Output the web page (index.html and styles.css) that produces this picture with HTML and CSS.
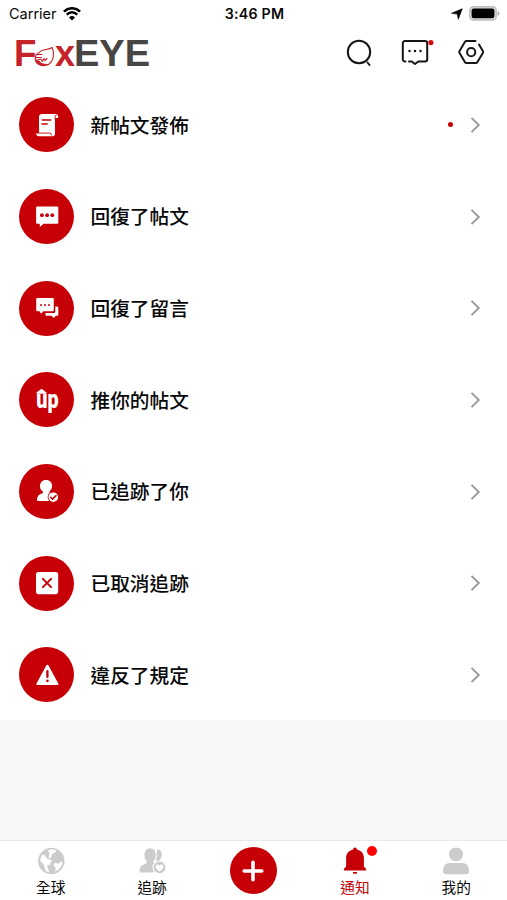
FILE: index.html
```html
<!DOCTYPE html>
<html lang="zh-Hant">
<head>
<meta charset="utf-8">
<title>FoxEYE</title>
<link rel="stylesheet" href="styles.css">
</head>
<body>
<div class="app">
  <div class="status">
    <div class="carrier">
      <span>Carrier</span>
      <svg width="18" height="14" viewBox="0 0 18 14" fill="none" stroke="#000" stroke-width="2.5"><path d="M.9 4.600C5.500.1 12.500.1 17.100 4.600M3.700 7.700C7 4.600 11 4.600 14.300 7.700"/><path d="M6 10.400a4.300 4.300 0 0 1 6 0l-3 3z" fill="#000" stroke="none"/></svg>
    </div>
    <div class="time">3:46 PM</div>
    <div class="power">
      <svg width="12" height="12" viewBox="0 0 12 12"><path d="M11.300.7 7.300 11.300 6.200 6.100.5 5.300z" stroke="#000" stroke-width=".6"/></svg>
      <svg width="31" height="15" viewBox="0 0 31 15"><rect x=".8" y=".8" width="26.400" height="13.200" rx="3.600" fill="#ddd" stroke="#bbb" stroke-width="1.400"/><rect x="2.600" y="2.500" width="22.800" height="9.800" rx="2.200"/><path d="M28.600 5.100q1.900.7 1.900 2.300t-1.900 2.300z" fill="#aaa"/></svg>
    </div>
  </div>
  <header class="header">
    <svg class="logo" width="142" height="52" viewBox="0 0 142 52">
      <text class="red" x="0" y="38.500" textLength="22.500" lengthAdjust="spacingAndGlyphs">F</text>
      <text class="red" x="41" y="38.500" textLength="20" lengthAdjust="spacingAndGlyphs">x</text>
      <text class="gray" x="60" y="38.500" textLength="76" lengthAdjust="spacingAndGlyphs">EYE</text>
      <g transform="translate(0 8)" fill="none" stroke="#c5222a" stroke-width="1.100" stroke-linecap="round" stroke-linejoin="round"><path d="M38.200 12.500C34.500 15.500 27.500 13.500 25.500 17.500M38.200 12.500C40.500 18 40 25.500 34.500 29.500M22 19.500h6M21.200 22.500h6M21.500 25.500l5.500-1.500M25.500 17.500c-3.500 1-4.800 4.500-4 7.500M27 24l1.300 2.500 1.700-3 1 2 2-2"/><path d="M21.300 24.500c.7 5.500 7.500 7.500 13.200 5-5 .3-8-.5-9.500-3.500" fill="#c5222a"/></g>
    </svg>
    <div class="actions">
      <svg width="28" height="30" viewBox="0 0 28 30"><circle cx="13" cy="14" r="11.200"/><path d="m21.500 24.500 2 2.500"/></svg>
      <svg width="34" height="30" viewBox="0 0 34 30"><path d="M4.500 23.500H4a2.200 2.200 0 0 1-2.200-2.200V5.200A2.200 2.200 0 0 1 4 3H24a2.200 2.200 0 0 1 2.200 2.200V21.300A2.200 2.200 0 0 1 24 23.500H17.300L14 26l-3.200-2.500H8"/><g class="dots"><circle cx="8.500" cy="13" r="1.250"/><circle cx="14" cy="13" r="1.250"/><circle cx="19.500" cy="13" r="1.250"/></g><circle class="badge" cx="29.900" cy="4.600" r="2.600"/></svg>
      <svg width="30" height="30" viewBox="0 0 30 30"><path d="M18.500 3H9.500Q8.500 3 8 3.800L2.400 13.200Q2 14 2.400 14.800L8 24.200Q8.500 25 9.500 25H18.800Q19.800 25 20.300 24.200L26 14.800Q26.400 14 26 13.200L22 6.500"/><circle cx="14.200" cy="14.200" r="4.100"/></svg>
    </div>
  </header>
  <main class="list">
    <div class="row"><span class="disc"><svg viewBox="0 0 24 24"><path d="M7 .9H20.800Q23.300 1 23.300 5H20V20.500Q20 23.300 17.500 23.300H4Q1.200 23.300 1.200 20H4V4Q4 .9 7 .9z"/><g class="cut"><path d="M7.300 7h8.400M7 11h5.200" stroke-width="1.500"/><path d="M2 20.100h13.500q.1 1.800 1.300 2M20.100 5.500V3.200q0-1.300 1.100-1.200" stroke-width=".9"/></g></svg></span><span class="label">新帖文發佈</span><i class="dot"></i><svg class="chevron" viewBox="0 0 11 16"><path d="m1.500.9 7.300 7.100-7.300 7.100"/></svg></div>
    <div class="row"><span class="disc"><svg viewBox="0 0 24 24"><path d="M2.200 2.500H22.200Q23.300 2.500 23.300 3.600V18.700Q23.300 19.800 22.200 19.800H8.500L4.800 23V19.800H2.200Q1.100 19.800 1.100 18.700V3.600Q1.100 2.500 2.200 2.500z"/><g fill="#c60006"><circle cx="6.900" cy="11.200" r="1.900"/><circle cx="12.100" cy="11.200" r="1.900"/><circle cx="17.300" cy="11.200" r="1.900"/></g></svg></span><span class="label">回復了帖文</span><svg class="chevron" viewBox="0 0 11 16"><path d="m1.500.9 7.300 7.100-7.300 7.100"/></svg></div>
    <div class="row"><span class="disc"><svg viewBox="0 0 24 24"><path d="M2.500 2H17.500Q18.800 2 18.800 3.300V14Q18.800 15.300 17.500 15.300H8.300L6.200 17.800 4.500 15.300H2.500Q1.200 15.300 1.200 14V3.300Q1.200 2 2.500 2zM20.300 10.500H22Q23.300 10.500 23.300 11.800V18.500Q23.300 19.800 22 19.800H21L18.500 22 16.500 19.800H11.500Q10.400 19.800 10.400 18.700V16.900H18.800Q20.300 16.900 20.300 15.400z"/><g fill="#c60006"><circle cx="6" cy="9" r="1"/><circle cx="10" cy="9" r="1"/><circle cx="14" cy="9" r="1"/></g></svg></span><span class="label">回復了留言</span><svg class="chevron" viewBox="0 0 11 16"><path d="m1.500.9 7.300 7.100-7.300 7.100"/></svg></div>
    <div class="row"><span class="disc"><svg class="push" viewBox="-4 -8 32 40"><path d="M6.500.7 11.500 4.500v1.200H1.500V4.500z"/><text class="up" transform="translate(1.300 19.800) scale(1 1.280)" textLength="22.300" lengthAdjust="spacingAndGlyphs">up</text></svg></span><span class="label">推你的帖文</span><svg class="chevron" viewBox="0 0 11 16"><path d="m1.500.9 7.300 7.100-7.300 7.100"/></svg></div>
    <div class="row"><span class="disc"><svg viewBox="0 0 24 24"><path d="M11 .9c4 0 6.100 2.700 6.100 6 0 2.500-1.100 4.100-2.700 5.300 0 1.600 1.200 2 3 2.800L14 22H3.200Q1.500 22 2 20.200C2.800 16 4.500 15.300 7.600 14.200q.6-1 .2-1.900C5.900 11.100 5 9.400 5 6.900 5 3.600 7.100.9 11 .9z"/><circle cx="18.300" cy="18.200" r="5.600" fill="#c60006"/><circle cx="18.300" cy="18.200" r="4.800"/><path class="cut" d="m15.600 18.300 1.900 1.800 3.500-3.500" stroke-width="1.500"/></svg></span><span class="label">已追跡了你</span><svg class="chevron" viewBox="0 0 11 16"><path d="m1.500.9 7.300 7.100-7.300 7.100"/></svg></div>
    <div class="row"><span class="disc"><svg viewBox="0 0 24 24"><rect x="1" y="1" width="22.200" height="22.200" rx="2.600"/><path class="cut" d="m7.900 7.900 8.200 8.200m0-8.200-8.200 8.200" stroke-width="2"/></svg></span><span class="label">已取消追跡</span><svg class="chevron" viewBox="0 0 11 16"><path d="m1.500.9 7.300 7.100-7.300 7.100"/></svg></div>
    <div class="row"><span class="disc"><svg viewBox="0 0 24 24"><path d="M11.300 2.500Q12.400.9 13.500 2.500L23.300 20.400Q24 22 22.300 22H2.500Q.8 22 1.500 20.400z"/><path class="cut" d="M12.400 8.100v5.800" stroke-width="2.300"/><circle cx="12.400" cy="17.800" r="1.350" fill="#c60006"/></svg></span><span class="label">違反了規定</span><svg class="chevron" viewBox="0 0 11 16"><path d="m1.500.9 7.300 7.100-7.300 7.100"/></svg></div>
  </main>
  <nav class="tabs">
    <a class="tab"><svg width="28" height="28" viewBox="0 0 28 28"><circle cx="14.300" cy="14" r="13.200"/><g fill="#fff"><path d="M11 3.200 15 2.300 19.500 3.500 17.500 6l-2.500 1-1 4-2.500-.5 1-4zM4.500 8.500 7 7.500l3 4 4.500 1.500-1.500 4.500-3 1.500 2.500 6.500-4-1.500L6.500 17 3 14zM18 15.500l3.500 1.500 2-2.500 2 1q-1 6.500-7.500 9l.8-3.500-2.300-2.500z"/></g></svg><span>全球</span></a>
    <a class="tab"><svg width="28" height="28" viewBox="0 0 28 28"><path d="M19 2.500c6 0 6 7.500 2.500 10.500l3 3H18z"/><path d="M12 .9c4.300 0 6.300 3 6.300 7 0 3.100-1 5-2.700 6.200 0 1.500.5 2.200 2.700 3.200L16 26H2.500Q.7 26 1 23.500C1.200 19 3.500 18 8 16.300q.8-1 .2-2.200C6.700 13 6 11 6 8c0-4.100 1.900-7.100 6-7.100z" stroke="#fff"/><circle cx="21.500" cy="20.400" r="7" fill="#fff"/><circle cx="21.500" cy="20.400" r="5.900"/><path d="M21.500 24.500C19 22.700 17.600 21.400 17.600 19.600 17.600 17.300 20.200 16.700 21.500 18.400 22.800 16.700 25.400 17.300 25.400 19.600 25.400 21.400 24 22.700 21.500 24.500z" fill="#fff"/></svg><span>追跡</span></a>
    <a class="tab"><b class="add"><svg width="24" height="24" viewBox="0 0 24 24"><path d="M12 3.200v17.600M3.200 12h17.600"/></svg></b></a>
    <a class="tab active"><svg width="28" height="28" viewBox="0 0 28 28"><path d="M14 .4q1.900 0 1.900 2.100c4.500 1 7 4.200 7 8.500V19.500l1.900 2q1.200 2-.8 2H4q-2 0-.8-2l1.900-2V11c0-4.300 2.500-7.500 7-8.500Q12.100.4 14 .4zM11.700 25h4.600q0 2-2.300 2t-2.300-2z"/></svg><span>通知</span><i class="alert"></i></a>
    <a class="tab"><svg width="28" height="28" viewBox="0 0 28 28"><circle cx="14" cy="7.400" r="7"/><path d="M1 24C1 18.500 4 16 8 16H20C24 16 27 18.500 27 24Q27 27.300 24 27.300H4Q1 27.300 1 24z"/></svg><span>我的</span></a>
  </nav>
</div>
</body>
</html>
```
FILE: styles.css
```css
* { box-sizing: border-box; }
body { margin: 0; background: #f8f8f8; color: #080808; font-family: "Noto Sans CJK TC", sans-serif; }
svg { display: block; flex: none; }
.app { display: flex; flex-direction: column; width: 507px; height: 900px; overflow: hidden; }
.status { display: grid; grid-template-columns: 1fr auto 1fr; align-items: center; height: 27px; padding: 0 7px 0 9px; background: #fff; font: 15px/27px Inter, sans-serif; }
.carrier, .power { display: flex; align-items: center; gap: 6px; }
.carrier span { font-size: 14.500px; }
.time { font-size: 14.200px; font-weight: 600; letter-spacing: .25px; }
.power { justify-content: flex-end; }
.header { display: flex; justify-content: space-between; height: 52px; padding: 0 20px 0 14px; background: #fff; }
.logo text { font: bold 37.500px "Liberation Sans", sans-serif; }
.logo .red { fill: #c5222a; }
.logo .gray { fill: #484644; }
.actions { display: flex; gap: 27px; padding-top: 11px; }
.actions svg { fill: none; stroke: #161616; stroke-width: 2; stroke-linecap: round; stroke-linejoin: round; }
.actions svg + svg + svg { margin-left: -5px; }
.actions .dots { fill: #161616; stroke: none; }
.actions .badge { fill: #d20a10; stroke: none; }
.list { display: grid; grid-template-rows: repeat(7, 91.650px); background: #fff; }
.row { display: flex; align-items: center; padding: 0 26px 0 19px; }
.disc { display: flex; align-items: center; justify-content: center; width: 55px; height: 55px; border-radius: 50%; background: #c60006; }
.disc svg { width: 24px; height: 24px; fill: #fff; }
.disc .push { width: 32px; height: 40px; }
.disc .cut { fill: none; stroke: #c60006; stroke-linecap: round; stroke-linejoin: round; }
.disc .up { font: 900 20px Roboto, sans-serif; }
.label { flex: 1; margin-left: 16.500px; font-size: 19.700px; font-weight: 500; line-height: 30px; }
.dot { width: 5px; height: 5px; margin-right: 17px; border-radius: 50%; background: #c60006; }
.chevron { width: 11px; height: 16px; margin-top: .5px; fill: none; stroke: #999; stroke-width: 1.900; }
.tabs { display: grid; grid-template-columns: repeat(5, 1fr); height: 60px; margin-top: auto; background: #fff; border-top: 1px solid #e8e8e8; }
.tab { position: relative; display: flex; flex-direction: column; align-items: center; padding-top: 6px; font-size: 14.700px; line-height: 24px; }
.tab > svg { fill: #ccc; }
.tab.active { color: #c60006; }
.tab.active > svg { fill: #c60006; }
.add { display: flex; align-items: center; justify-content: center; width: 47px; height: 47px; border-radius: 50%; background: #c60006; }
.add svg { fill: none; stroke: #fff; stroke-width: 3.600; stroke-linecap: round; }
.alert { position: absolute; top: 5px; left: 63px; width: 10px; height: 10px; border-radius: 50%; background: #f00; }
```
